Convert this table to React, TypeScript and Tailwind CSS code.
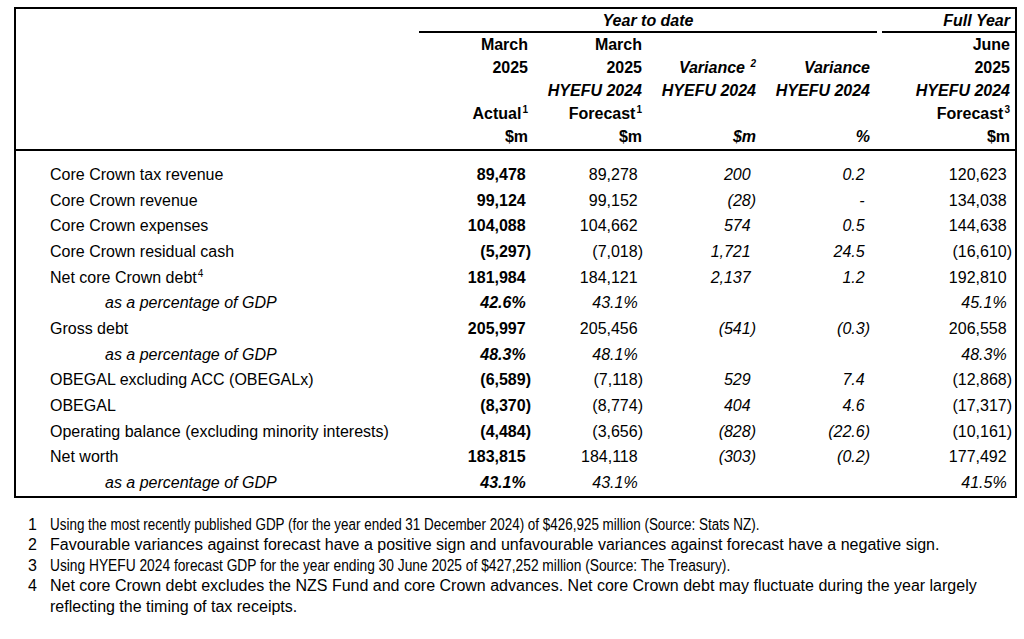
import React from "react";

type Row = {
  label: string;
  sup?: string;
  pct?: boolean;
  a: string;
  f: string;
  v: string;
  p: string;
  fy: string;
};

const rows: Row[] = [
  { label: "Core Crown tax revenue", a: "89,478", f: "89,278", v: "200", p: "0.2", fy: "120,623" },
  { label: "Core Crown revenue", a: "99,124", f: "99,152", v: "(28)", p: "-", fy: "134,038" },
  { label: "Core Crown expenses", a: "104,088", f: "104,662", v: "574", p: "0.5", fy: "144,638" },
  { label: "Core Crown residual cash", a: "(5,297)", f: "(7,018)", v: "1,721", p: "24.5", fy: "(16,610)" },
  { label: "Net core Crown debt", sup: "4", a: "181,984", f: "184,121", v: "2,137", p: "1.2", fy: "192,810" },
  { label: "as a percentage of GDP", pct: true, a: "42.6%", f: "43.1%", v: "", p: "", fy: "45.1%" },
  { label: "Gross debt", a: "205,997", f: "205,456", v: "(541)", p: "(0.3)", fy: "206,558" },
  { label: "as a percentage of GDP", pct: true, a: "48.3%", f: "48.1%", v: "", p: "", fy: "48.3%" },
  { label: "OBEGAL excluding ACC (OBEGALx)", a: "(6,589)", f: "(7,118)", v: "529", p: "7.4", fy: "(12,868)" },
  { label: "OBEGAL", a: "(8,370)", f: "(8,774)", v: "404", p: "4.6", fy: "(17,317)" },
  { label: "Operating balance (excluding minority interests)", a: "(4,484)", f: "(3,656)", v: "(828)", p: "(22.6)", fy: "(10,161)" },
  { label: "Net worth", a: "183,815", f: "184,118", v: "(303)", p: "(0.2)", fy: "177,492" },
  { label: "as a percentage of GDP", pct: true, a: "43.1%", f: "43.1%", v: "", p: "", fy: "41.5%" },
];

function Num({ value }: { value: string }) {
  if (!value) return null;
  const paren = value.endsWith(")");
  return (
    <>
      {value}
      {!paren && <span className="invisible">)</span>}
    </>
  );
}

function Sup({ children }: { children: React.ReactNode }) {
  return <sup className="text-[10px] -top-[6px] ml-[1px]">{children}</sup>;
}

const grid = "grid grid-cols-[404px_111px_112px_113px_114px_142px]";

export default function App() {
  return (
    <div className="w-[1024px] h-[639px] bg-white text-black text-[16px] font-['Liberation_Sans',Arial,sans-serif] overflow-hidden">
      <div className="pt-[7px] pl-[14px]">
        <div className="w-[1003px] border-2 border-black">
          {/* Header group row */}
          <div className="flex h-[24px]">
            <div className="w-[403px]" />
            <div className="w-[458px] border-b-2 border-black text-center italic font-bold leading-[23px]">
              Year to date
            </div>
            <div className="w-[5px]" />
            <div className="flex-1 border-b-2 border-black text-right italic font-bold pr-[5px] leading-[23px]">
              Full Year
            </div>
          </div>
          {/* Column headers */}
          <div className={`${grid} border-b-2 border-black font-bold leading-[23px] pr-[3px] pb-[1px]`}>
            <div />
            <div className="text-right pr-[3px]">
              <div>March</div>
              <div>2025</div>
              <div>&nbsp;</div>
              <div>
                Actual<Sup>1</Sup>
              </div>
              <div>$m</div>
            </div>
            <div className="text-right pr-[1px]">
              <div>March</div>
              <div>2025</div>
              <div className="italic">HYEFU 2024</div>
              <div>
                Forecast<Sup>1</Sup>
              </div>
              <div>$m</div>
            </div>
            <div className="text-right italic">
              <div>&nbsp;</div>
              <div>
                Variance <Sup>2</Sup>
              </div>
              <div>HYEFU 2024</div>
              <div>&nbsp;</div>
              <div>$m</div>
            </div>
            <div className="text-right italic">
              <div>&nbsp;</div>
              <div>Variance</div>
              <div>HYEFU 2024</div>
              <div>&nbsp;</div>
              <div>%</div>
            </div>
            <div className="text-right pr-[2px]">
              <div>June</div>
              <div>2025</div>
              <div className="italic">HYEFU 2024</div>
              <div>
                Forecast<Sup>3</Sup>
              </div>
              <div>$m</div>
            </div>
          </div>
          {/* Body */}
          <div className="pt-[11px] pr-[3px]">
            {rows.map((r, i) => (
              <div key={i} className={`${grid} h-[25.7px] items-center leading-[20px]`}>
                <div className={r.pct ? "pl-[89px] italic" : "pl-[34px]"}>
                  {r.label}
                  {r.sup && <Sup>{r.sup}</Sup>}
                </div>
                <div className={`text-right font-bold ${r.pct ? "italic" : ""}`}>
                  <Num value={r.a} />
                </div>
                <div className={`text-right ${r.pct ? "italic" : ""}`}>
                  <Num value={r.f} />
                </div>
                <div className="text-right italic">
                  <Num value={r.v} />
                </div>
                <div className="text-right italic">
                  <Num value={r.p} />
                </div>
                <div className={`text-right ${r.pct ? "italic" : ""}`}>
                  <Num value={r.fy} />
                </div>
              </div>
            ))}
          </div>
        </div>
      </div>
      {/* Footnotes */}
      <div className="mt-[17px] pl-[28px] leading-[20.5px]">
        <div className="flex whitespace-nowrap">
          <div className="w-[22px]">1</div>
          <div className="origin-left scale-x-[0.84]">
            Using the most recently published GDP (for the year ended 31 December 2024) of $426,925 million (Source: Stats NZ).
          </div>
        </div>
        <div className="flex whitespace-nowrap">
          <div className="w-[22px]">2</div>
          <div>
            Favourable variances against forecast have a positive sign and unfavourable variances against forecast have a negative sign.
          </div>
        </div>
        <div className="flex whitespace-nowrap">
          <div className="w-[22px]">3</div>
          <div className="origin-left scale-x-[0.86]">
            Using HYEFU 2024 forecast GDP for the year ending 30 June 2025 of $427,252 million (Source: The Treasury).
          </div>
        </div>
        <div className="flex whitespace-nowrap">
          <div className="w-[22px]">4</div>
          <div>
            Net core Crown debt excludes the NZS Fund and core Crown advances. Net core Crown debt may fluctuate during the year largely
            <br />
            reflecting the timing of tax receipts.
          </div>
        </div>
      </div>
    </div>
  );
}
